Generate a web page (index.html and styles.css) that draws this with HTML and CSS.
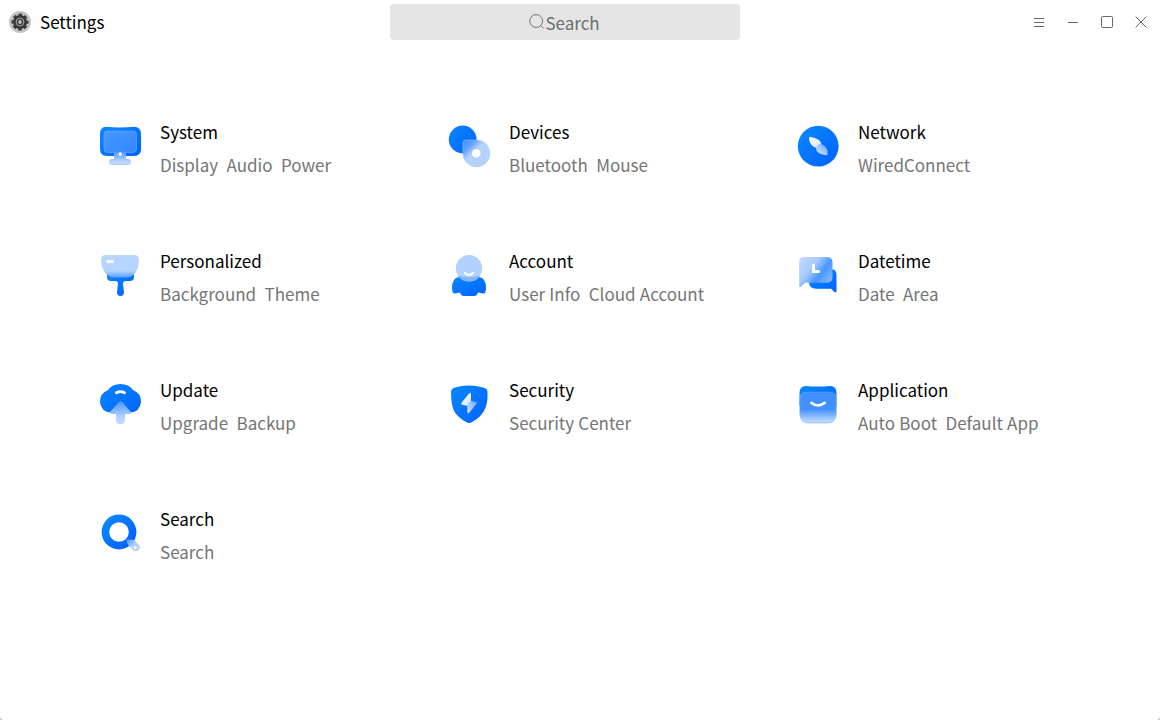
FILE: index.html
```html
<!DOCTYPE html>
<html lang="en">
<head>
<meta charset="utf-8">
<title>Settings</title>
<link rel="stylesheet" href="styles.css">
</head>
<body>
<svg class="defs" aria-hidden="true">
  <defs>
    <linearGradient id="blue" x1="0" y1="0" x2="1" y2="1"><stop offset="0" stop-color="#0a88ff"/><stop offset="1" stop-color="#0062ff"/></linearGradient>
    <linearGradient id="screen" x1="0" y1="0" x2="1" y2="1"><stop offset="0" stop-color="#479bff"/><stop offset="1" stop-color="#3484ff"/></linearGradient>
    <linearGradient id="rise" x1="0" y1="0" x2="0" y2="1"><stop offset="0" stop-color="#4a94ff"/><stop offset=".75" stop-color="#b9d5ff"/></linearGradient>
    <linearGradient id="disc" x1="0" y1="0" x2="1" y2="1"><stop offset="0" stop-color="#3989ff"/><stop offset=".25" stop-color="#68a3ff"/><stop offset=".42" stop-color="#b5d2ff"/></linearGradient>
    <linearGradient id="white" x1="0" y1="0" x2="1" y2="1"><stop offset="0" stop-color="#fff"/><stop offset="1" stop-color="#d5e5ff"/></linearGradient>
    <linearGradient id="glass" x1="1" y1="0" x2="0" y2="1"><stop offset="0" stop-color="#63a3ff"/><stop offset="1" stop-color="#dce9ff"/></linearGradient>
    <linearGradient id="brush" x1="0" y1="0" x2="0" y2="1"><stop offset="0" stop-color="#b9d6ff"/><stop offset=".7" stop-color="#b5d3ff"/><stop offset="1" stop-color="#5aa0ff"/></linearGradient>
    <linearGradient id="bubble" x1="0" y1="0" x2="1" y2=".7"><stop offset=".1" stop-color="#bdd7ff"/><stop offset=".42" stop-color="#a5caff"/><stop offset=".7" stop-color="#4a96ff"/><stop offset="1" stop-color="#82b5ff"/></linearGradient>
    <linearGradient id="box" x1="0" y1="0" x2="0" y2="1"><stop offset="0" stop-color="#3f8dff"/><stop offset=".55" stop-color="#4590ff"/><stop offset=".95" stop-color="#bdd8ff"/></linearGradient>
    <linearGradient id="handle" x1="0" y1="0" x2="1" y2="1"><stop offset="0" stop-color="#438fff"/><stop offset=".5" stop-color="#b3d1ff"/></linearGradient>
  </defs>
</svg>
<main class="window">
  <header class="titlebar">
    <div class="brand">
      <svg class="gear" viewBox="0 0 22 22">
        <circle cx="11" cy="11" r="11" fill="#c3c3c3"/>
        <circle cx="11" cy="11" r="7" fill="#383838"/>
        <circle cx="11" cy="11" r="7.4" fill="none" stroke="#383838" stroke-width="2.2" stroke-dasharray="3.4 2.41" stroke-dashoffset="1.7"/>
        <circle cx="11" cy="11" r="3.9" fill="none" stroke="#ababab"/>
        <circle cx="11" cy="11" r="1.9" fill="#bcbcbc"/>
      </svg>
      <h1 class="title">Settings</h1>
    </div>
    <div class="search">
      <svg class="lens" viewBox="0 0 16 16"><circle cx="7.2" cy="7" r="6.4"/><path d="M11.8 11.6 14.7 14.5"/></svg>
      <span>Search</span>
    </div>
    <nav class="controls">
      <svg viewBox="0 0 14 14"><path d="M2 3.5h10M2 7.5h10M2 11.5h10"/></svg>
      <svg viewBox="0 0 14 14"><path d="M2 7.5h10"/></svg>
      <svg viewBox="0 0 14 14"><rect x="1.5" y="1.5" width="11" height="11" rx="1"/></svg>
      <svg viewBox="0 0 14 14"><path d="M1.6 1.6l10.8 10.8M12.4 1.6 1.6 12.4"/></svg>
    </nav>
  </header>
  <section class="grid">
    <article class="item">
      <svg class="icon" viewBox="6 8 44 44">
        <path d="M14 10.8Q28 12.4 42 10.8Q49 11 49 18V33Q49 40 42 40H15Q8 40 8 33V18Q8 11 14 10.8Z" fill="url(#blue)"/>
        <rect x="12" y="15" width="32.5" height="21.5" rx="3.5" fill="url(#screen)" stroke="#62a9ff" stroke-width=".7"/>
        <path d="M22 35.5H34V43H36Q39 43 39 46T36 49H20Q17 49 17 46T20 43H22Z" fill="url(#rise)"/>
        <circle cx="28.2" cy="38" r="1.7" fill="#fff"/>
      </svg>
      <div class="text"><h2>System</h2><p>Display  Audio  Power</p></div>
    </article>
    <article class="item">
      <svg class="icon" viewBox="7 8 44 44">
        <circle cx="22.7" cy="23.5" r="13.9" fill="url(#blue)"/>
        <path d="M23 27Q23 24 26 24H36.5A13.4 13.4 0 1 1 23 37.4Z" fill="url(#disc)" stroke="#a0c8ff" stroke-width=".6"/>
        <circle cx="36.3" cy="37.3" r="4.3" fill="#fff"/>
      </svg>
      <div class="text"><h2>Devices</h2><p>Bluetooth  Mouse</p></div>
    </article>
    <article class="item">
      <svg class="icon" viewBox="6 8 44 44">
        <circle cx="28.2" cy="30.2" r="20.4" fill="url(#blue)"/>
        <path d="M19 22.5Q18.5 20.5 21 21Q31 23 31.3 28L27 32Q20 31 19 22.5Z" fill="url(#white)"/>
        <path d="M30.5 27.8Q38.5 31 37.5 38.2Q37.3 39.5 35.8 39.2Q26 38 26 31.8Q28 28 30.5 27.8Z" fill="url(#glass)"/>
      </svg>
      <div class="text"><h2>Network</h2><p>WiredConnect</p></div>
    </article>
    <article class="item">
      <svg class="icon" viewBox="6 8 44 44">
        <path d="M15 28H42V32Q42 36 38 36H34Q31 36 31 39L32 47Q32 51 28.5 51T25 47L26 39Q26 36 23 36H19Q15 36 15 32Z" fill="url(#blue)"/>
        <path d="M14 10H42Q47 10 47 15Q47 24 42 29.5Q39 32.5 35 32.5H22Q18 32.5 15 29.5Q9 24 9 15Q9 10 14 10Z" fill="url(#brush)"/>
        <rect x="14.5" y="15" width="7.5" height="3" rx="1.5" fill="#fff"/>
      </svg>
      <div class="text"><h2>Personalized</h2><p>Background  Theme</p></div>
    </article>
    <article class="item">
      <svg class="icon" viewBox="7 8 44 44">
        <path d="M19 32H39Q46 33 46 43Q46 49 43 48.5L38 47.5Q37 51 34 51H24Q21 51 20 47.5L15 48.5Q12 49 12 43Q12 33 19 32Z" fill="url(#blue)"/>
        <circle cx="29" cy="23.3" r="13.2" fill="#b3d1ff"/>
        <path d="M18 30.5A13.2 13.2 0 0 0 40 30.5Q29 34 18 30.5Z" fill="#82b4ff"/>
        <path d="M25 28Q29 31.8 33 28" fill="none" stroke="#fff" stroke-width="2.2" stroke-linecap="round"/>
      </svg>
      <div class="text"><h2>Account</h2><p>User Info  Cloud Account</p></div>
    </article>
    <article class="item">
      <svg class="icon" viewBox="6 8 44 44">
        <path d="M24 24H41Q46.5 24 46.5 30V46Q46.5 48.5 44 46.5L41 43.7H26Q19 43.7 19 37V30Z" fill="url(#blue)"/>
        <path d="M14 12H37Q42.5 12 42.5 17.5V32Q42.5 37.8 37 37.8H15L11 41.8Q9.2 43 9.2 40.5V17Q9.2 12 14 12Z" fill="url(#bubble)"/>
        <path d="M23.5 20V26.5H28.5" fill="none" stroke="#fff" stroke-width="3" stroke-linecap="round"/>
      </svg>
      <div class="text"><h2>Datetime</h2><p>Date  Area</p></div>
    </article>
    <article class="item">
      <svg class="icon" viewBox="6 8 44 44">
        <path d="M16 16Q20 10 28.5 10T41 16Q49 19 49 28Q48 38 38 38.5H19Q9 38 8 28Q8 19 16 16Z" fill="url(#blue)"/>
        <path d="M27.3 27.5Q28.5 26.4 29.7 27.5L38.5 37.5Q40 40 37 40H33V46Q33 50 28.5 50T24 46V40H20Q17 40 18.5 37.5Z" fill="url(#rise)"/>
        <path d="M24.5 18.8Q28.5 16.4 32.5 18.8" fill="none" stroke="#fff" stroke-width="2.8" stroke-linecap="round"/>
      </svg>
      <div class="text"><h2>Update</h2><p>Upgrade  Backup</p></div>
    </article>
    <article class="item">
      <svg class="icon" viewBox="7 8 44 44">
        <path d="M29 11.5Q38 11.5 44.5 14Q47.5 15 47.5 18Q48 30 44 37Q39 45 31 48.5Q29 49.5 27 48.5Q18 44 14 37Q11 30 11 18Q11 15 13.5 14Q20 11.5 29 11.5Z" fill="url(#blue)"/>
        <path d="M31 19.5V27.5L28 32L22 30.8Q20.5 30.3 21.5 28.7L28.8 19.8Q31 18 31 19.5Z" fill="url(#white)"/>
        <path d="M30.5 26.8L36 28Q37.5 28.5 36.5 29.8L29 39Q27.5 40 27.3 38.3V30.5Z" fill="url(#glass)"/>
      </svg>
      <div class="text"><h2>Security</h2><p>Security Center</p></div>
    </article>
    <article class="item">
      <svg class="icon" viewBox="6 8 44 44">
        <path d="M16 12Q28 13 40 12Q46.5 12 46.5 19V32H9.5V19Q9.5 12 16 12Z" fill="url(#blue)"/>
        <path d="M16 18.2H40Q46.3 18.2 46.3 25V39Q46.3 49 37 49H19Q9.8 49 9.8 39V25Q9.8 18.2 16 18.2Z" fill="url(#box)" stroke="#7ab2ff" stroke-width=".6"/>
        <path d="M21.3 28.8Q28 34.2 34.7 28.8" fill="none" stroke="#fff" stroke-width="2.6" stroke-linecap="round"/>
      </svg>
      <div class="text"><h2>Application</h2><p>Auto Boot  Default App</p></div>
    </article>
    <article class="item">
      <svg class="icon" viewBox="6 8 44 44">
        <circle cx="27" cy="29" r="13.6" fill="none" stroke="url(#blue)" stroke-width="7.6"/>
        <path d="M34.5 36.5H40Q42 36.5 43 38L47.5 42.5Q48.5 44.5 47 46.5Q44.5 49.5 41.5 47.5L36 41.5Q34 39.5 34.5 36.5Z" fill="url(#handle)"/>
        <circle cx="43.2" cy="44.4" r="1.5" fill="#fff"/>
      </svg>
      <div class="text"><h2>Search</h2><p>Search</p></div>
    </article>
  </section>
</main>
</body>
</html>
```

FILE: styles.css
```css
* { box-sizing: border-box; margin: 0; padding: 0; }
body { background: #c4c4c4; font: 400 17px/28px "Noto Sans CJK SC", "Noto Sans", sans-serif; color: #000; }
svg { display: block; flex: none; }
.defs { position: absolute; width: 0; height: 0; }
.window { width: 1160px; height: 720px; background: #fff; border-radius: 0 0 4px 4px; overflow: hidden; }
.titlebar { height: 44px; display: grid; grid-template-columns: 390px 350px 1fr; align-items: center; }
.brand { display: flex; align-items: center; gap: 9px; padding-left: 9px; }
.gear { width: 22px; height: 22px; }
.title { font-size: 17px; font-weight: 400; }
.search { height: 36px; border-radius: 4px; background: #e5e5e5; color: #68706e; display: flex; align-items: center; justify-content: center; padding-right: 1px; }
.search span { padding-top: 2px; }
.lens { width: 16px; height: 16px; fill: none; stroke: #727272; stroke-width: 1; }
.controls { display: flex; gap: 20px; justify-content: flex-end; padding-right: 12px; }
.controls svg { width: 14px; height: 14px; fill: none; stroke: #686868; stroke-width: 1; }
.grid { display: grid; grid-template-columns: repeat(3, 349px); grid-auto-rows: 129px; padding: 74px 0 0 98px; }
.item { display: flex; gap: 18px; }
.icon { width: 44px; height: 44px; margin-top: 6px; }
.text h2 { font-size: 17px; font-weight: 400; line-height: 28px; }
.text p { line-height: 28px; margin-top: 5px; color: #757575; white-space: pre; word-spacing: .4px; }
```
